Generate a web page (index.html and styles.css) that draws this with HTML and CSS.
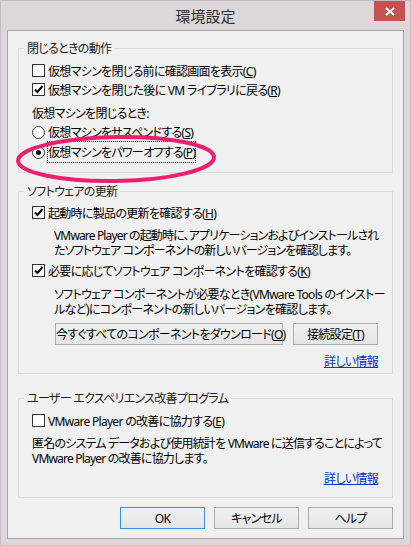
FILE: index.html
```html
<!DOCTYPE html>
<html lang="ja">
<head>
    <meta charset="UTF-8">
    <title>環境設定</title>
    <link rel="stylesheet" href="styles.css">
</head>
<body>
<div class="window">
    <div class="title-bar">
        <span></span>
        <span class="title">環境設定</span>
        <span class="close-btn">
            <svg width="10" height="9" viewBox="0 0 10 9"><path d="M1 1L9 8M9 1L1 8" stroke="#fff" stroke-width="2"/></svg>
        </span>
    </div>

    <div class="client">
        <!-- 閉じるときの動作 -->
        <fieldset class="group group-close">
            <legend>閉じるときの動作</legend>
            <div class="row first">
                <span class="check"></span>
                <span>仮想マシンを閉じる前に確認画面を表示(<u>C</u>)</span>
            </div>
            <div class="row">
                <span class="check checked"><svg width="11" height="11" viewBox="0 0 11 11"><path d="M2 5.5L4.5 8L9.5 2" stroke="#000" stroke-width="2" fill="none"/></svg></span>
                <span>仮想マシンを閉じた後に VM ライブラリに戻る(<u>R</u>)</span>
            </div>
            <div class="row label-row">仮想マシンを閉じるとき:</div>
            <div class="row radio-row">
                <span class="radio"></span>
                <span>仮想マシンをサスペンドする(<u>S</u>)</span>
            </div>
            <div class="row radio-row">
                <span class="radio selected"></span>
                <span class="focused">仮想マシンをパワーオフする(<u>P</u>)</span>
            </div>
        </fieldset>

        <!-- ソフトウェアの更新 -->
        <fieldset class="group group-update">
            <legend>ソフトウェアの更新</legend>
            <div class="row first">
                <span class="check checked"><svg width="11" height="11" viewBox="0 0 11 11"><path d="M2 5.5L4.5 8L9.5 2" stroke="#000" stroke-width="2" fill="none"/></svg></span>
                <span>起動時に製品の更新を確認する(<u>H</u>)</span>
            </div>
            <p class="desc indent desc-start"><span class="line">VMware Player の起動時に、アプリケーションおよびインストールされ</span><span class="line">たソフトウェア コンポーネントの新しいバージョンを確認します。</span></p>
            <div class="row second">
                <span class="check checked"><svg width="11" height="11" viewBox="0 0 11 11"><path d="M2 5.5L4.5 8L9.5 2" stroke="#000" stroke-width="2" fill="none"/></svg></span>
                <span>必要に応じてソフトウェア コンポーネントを確認する(<u>K</u>)</span>
            </div>
            <p class="desc indent desc-tools"><span class="line">ソフトウェア コンポーネントが必要なとき(VMware Tools のインストー</span><span class="line">ルなど)にコンポーネントの新しいバージョンを確認します。</span></p>
            <div class="btn-row">
                <button class="btn btn-download">今すぐすべてのコンポーネントをダウンロード(<u>O</u>)</button>
                <button class="btn btn-proxy">接続設定(<u>T</u>)</button>
            </div>
            <div class="link-row"><a href="#">詳しい情報</a></div>
        </fieldset>

        <!-- ユーザー エクスペリエンス改善プログラム -->
        <fieldset class="group group-ceip">
            <legend>ユーザー エクスペリエンス改善プログラム</legend>
            <div class="row first">
                <span class="check"></span>
                <span>VMware Player の改善に協力する(<u>E</u>)</span>
            </div>
            <p class="desc desc-ceip"><span class="line">匿名のシステム データおよび使用統計を VMware に送信することによって</span><span class="line">VMware Player の改善に協力します。</span></p>
            <div class="link-row"><a href="#">詳しい情報</a></div>
        </fieldset>

        <div class="dialog-buttons">
            <button class="btn btn-default">OK</button>
            <button class="btn">キャンセル</button>
            <button class="btn">ヘルプ</button>
        </div>
    </div>

    <!-- 強調の丸 -->
    <svg class="highlight" width="210" height="56" viewBox="0 0 210 56">
        <ellipse cx="104" cy="28" rx="98" ry="22" fill="none" stroke="#ec1f6d" stroke-width="4" transform="rotate(-1 104 28)"/>
    </svg>
</div>
</body>
</html>
```

FILE: styles.css
```css
body {
    margin: 0;
    font-family: "Noto Sans", "Noto Sans CJK JP", sans-serif;
    font-size: 12px;
    color: #000;
}

.window {
    position: relative;
    width: 409px;
    height: 544px;
    background-color: #ddd6db;
    border: 1px solid #c3bbc1;
}

.title-bar {
    height: 29px;
    display: grid;
    grid-template-columns: 1fr auto 1fr;
    align-items: start;
    padding-right: 5px;
}

.title {
    font-family: "Noto Sans CJK JP", sans-serif;
    font-size: 15px;
    line-height: 30px;
    color: #2e2e2e;
    padding-left: 5px;
}

.close-btn {
    justify-self: end;
    width: 31px;
    height: 20px;
    background-color: #c75050;
    display: flex;
    align-items: center;
    justify-content: center;
}

.client {
    margin: 0 6px;
    background-color: #f0f0f0;
    border: 1px solid #aba5a9;
    padding-top: 10px;
    box-sizing: border-box;
    height: 509px;
    font-feature-settings: "palt";
    letter-spacing: -0.7px;
}

/* group boxes */
.group {
    border: 1px solid #dcdcdc;
    margin: 0 10px;
    padding: 0 14px 10px 13px;
    min-width: 0;
}

.group legend {
    padding: 0 3px;
    margin-left: -8px;
    line-height: 15px;
    color: #1a1a1a;
}

.group-update {
    margin-top: 11px;
    padding-bottom: 4px;
}

.group-ceip {
    margin-top: 17px;
    padding-bottom: 11px;
}

.row {
    display: flex;
    align-items: center;
    gap: 3px;
    height: 19px;
    white-space: nowrap;
}

.row.first {
    margin-top: 5px;
}

.group-update .row.first {
    margin-top: 4px;
}

.row.second {
    margin-top: 3px;
}

.label-row {
    margin-top: 4px;
}

.radio-row {
    height: 20px;
}

.check {
    width: 11px;
    height: 11px;
    border: 1px solid #333;
    background: #fff;
    display: flex;
    align-items: center;
    justify-content: center;
    flex-shrink: 0;
}

.radio {
    width: 11px;
    height: 11px;
    border: 1px solid #333;
    border-radius: 50%;
    background: #fff;
    display: flex;
    align-items: center;
    justify-content: center;
    flex-shrink: 0;
}

.radio.selected::after {
    content: "";
    width: 5px;
    height: 5px;
    border-radius: 50%;
    background: #111;
}

.focused {
    outline: 1px dotted #222;
    outline-offset: 0;
    padding: 1px 0;
}

u {
    text-decoration: underline;
}

.desc {
    margin: 6px -12px 0 0;
    white-space: nowrap;
}

.desc .line {
    display: block;
    height: 15px;
    line-height: 15px;
}

.desc.indent {
    margin-left: 22px;
}

.desc.desc-start {
    margin-top: 6px;
    letter-spacing: -0.85px;
}

.desc.desc-tools {
    margin-top: 7px;
}

.desc.desc-ceip {
    letter-spacing: -0.8px;
}

.btn {
    height: 22px;
    font-family: inherit;
    font-size: 12px;
    font-feature-settings: "palt";
    letter-spacing: -0.7px;
    color: #000;
    background: linear-gradient(#f0f0f0, #e5e5e5);
    border: 1px solid #acacac;
    padding: 0;
    margin: 0;
    white-space: nowrap;
}

.btn-row {
    display: flex;
    gap: 10px;
    margin: 6px 0 0 23px;
}

.btn-download {
    width: 228px;
}

.btn-proxy {
    width: 85px;
}

.link-row {
    text-align: right;
    line-height: 15px;
    margin-top: 9px;
}

.group-ceip .link-row {
    margin-top: 5px;
}

.link-row a {
    color: #0033cc;
    text-decoration: underline;
}

.dialog-buttons {
    display: flex;
    justify-content: flex-end;
    gap: 9px;
    margin: 9px 10px 0 0;
}

.dialog-buttons .btn {
    width: 85px;
}

.btn-default {
    border-color: #3c8fe0;
}

.highlight {
    position: absolute;
    left: 11px;
    top: 130px;
}
```
